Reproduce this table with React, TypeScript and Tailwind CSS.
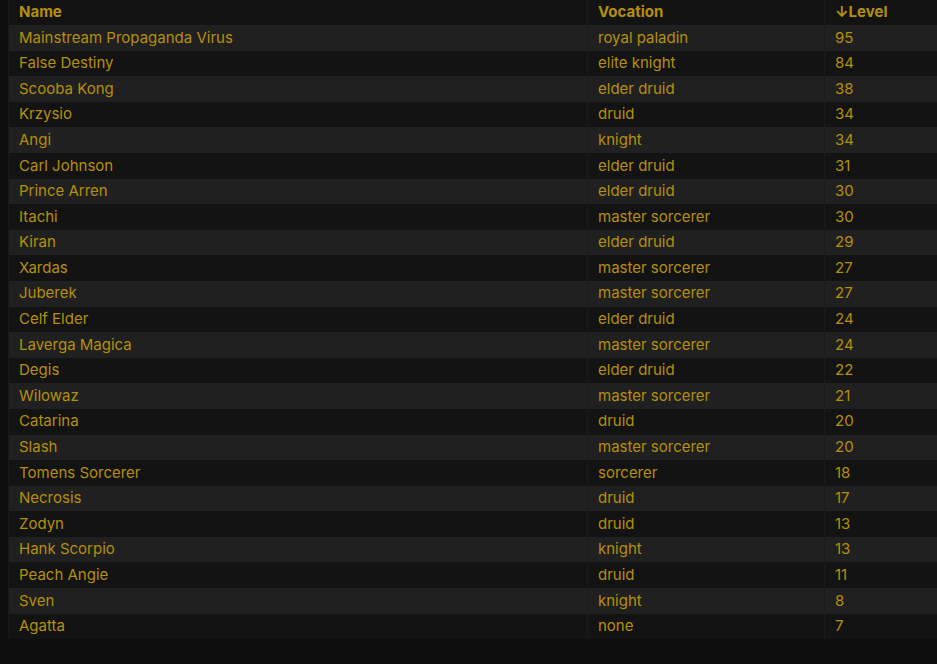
const rows: [string, string, number][] = [
  ["Mainstream Propaganda Virus", "royal paladin", 95],
  ["False Destiny", "elite knight", 84],
  ["Scooba Kong", "elder druid", 38],
  ["Krzysio", "druid", 34],
  ["Angi", "knight", 34],
  ["Carl Johnson", "elder druid", 31],
  ["Prince Arren", "elder druid", 30],
  ["Itachi", "master sorcerer", 30],
  ["Kiran", "elder druid", 29],
  ["Xardas", "master sorcerer", 27],
  ["Juberek", "master sorcerer", 27],
  ["Celf Elder", "elder druid", 24],
  ["Laverga Magica", "master sorcerer", 24],
  ["Degis", "elder druid", 22],
  ["Wilowaz", "master sorcerer", 21],
  ["Catarina", "druid", 20],
  ["Slash", "master sorcerer", 20],
  ["Tomens Sorcerer", "sorcerer", 18],
  ["Necrosis", "druid", 17],
  ["Zodyn", "druid", 13],
  ["Hank Scorpio", "knight", 13],
  ["Peach Angie", "druid", 11],
  ["Sven", "knight", 8],
  ["Agatta", "none", 7],
];

export default function App() {
  return (
    <div className="h-[664px] w-full overflow-hidden bg-[#0e0e0e] font-['Inter',sans-serif] text-[15px] text-[#b58f0c]">
      <table className="ml-[8px] -mt-[1px] w-[calc(100%-8px)] border-collapse border-l border-[#181818]">
        <thead>
          <tr className="h-[26px] bg-[#131313]">
            <th className="w-[579px] px-[10px] text-left font-bold">Name</th>
            <th className="w-[237px] border-l border-[#1b1b1b] px-[10px] text-left font-bold">Vocation</th>
            <th className="border-l border-[#1b1b1b] px-[10px] text-left font-bold">↓Level</th>
          </tr>
        </thead>
        <tbody>
          {rows.map(([name, voc, lvl], i) => (
            <tr key={name} className={i % 2 === 0 ? "h-[25.6px] bg-[#202020]" : "h-[25.6px] bg-[#131313]"}>
              <td className="px-[10px] py-0">{name}</td>
              <td className="border-l border-[#1b1b1b] px-[10px] py-0">{voc}</td>
              <td className="border-l border-[#1b1b1b] px-[10px] py-0">{lvl}</td>
            </tr>
          ))}
        </tbody>
      </table>
    </div>
  );
}
